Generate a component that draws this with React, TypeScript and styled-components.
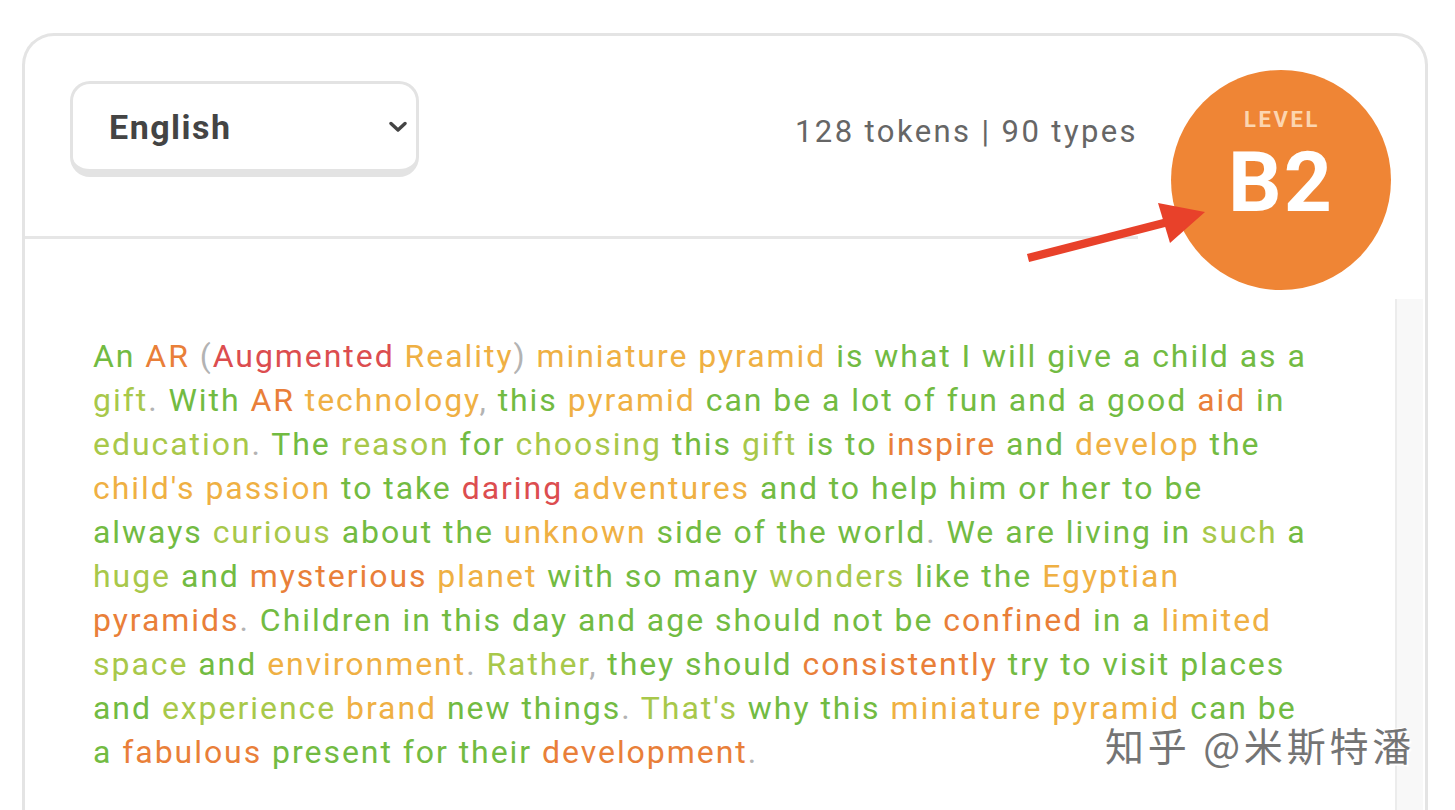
import React from "react";
import styled, { createGlobalStyle } from "styled-components";

const Global = createGlobalStyle`
  html, body { margin: 0; padding: 0; background: #ffffff; }
  body { font-family: Roboto, "Noto Sans", sans-serif; overflow: hidden; }
`;

type Tone = "g" | "l" | "y" | "o" | "r" | "p";
const TONES: Record<Tone, string> = {
  g: "#72bb42",
  l: "#a8c84a",
  y: "#efb043",
  o: "#e97f39",
  r: "#dc4d4f",
  p: "#b3b3b3",
};

const LINES: [Tone, string][][] = [
  [["g", "An "], ["o", "AR "], ["p", "("], ["r", "Augmented "], ["y", "Reality"], ["p", ") "], ["y", "miniature pyramid "], ["g", "is what I will give a child as a"]],
  [["l", "gift"], ["p", ". "], ["g", "With "], ["o", "AR "], ["y", "technology"], ["p", ", "], ["g", "this "], ["y", "pyramid "], ["g", "can be a lot of fun and a good "], ["o", "aid "], ["g", "in"]],
  [["l", "education"], ["p", ". "], ["g", "The "], ["l", "reason "], ["g", "for "], ["l", "choosing "], ["g", "this "], ["l", "gift "], ["g", "is to "], ["o", "inspire "], ["g", "and "], ["y", "develop "], ["g", "the"]],
  [["y", "child's passion "], ["g", "to take "], ["r", "daring "], ["y", "adventures "], ["g", "and to help him or her to be"]],
  [["g", "always "], ["l", "curious "], ["g", "about the "], ["y", "unknown "], ["g", "side of the world"], ["p", ". "], ["g", "We are living in "], ["l", "such "], ["g", "a"]],
  [["l", "huge "], ["g", "and "], ["o", "mysterious "], ["y", "planet "], ["g", "with so many "], ["l", "wonders "], ["g", "like the "], ["y", "Egyptian"]],
  [["o", "pyramids"], ["p", ". "], ["g", "Children in this day and age should not be "], ["o", "confined "], ["g", "in a "], ["y", "limited"]],
  [["l", "space "], ["g", "and "], ["y", "environment"], ["p", ". "], ["l", "Rather"], ["p", ", "], ["g", "they should "], ["o", "consistently "], ["g", "try to visit places"]],
  [["g", "and "], ["l", "experience "], ["y", "brand "], ["g", "new things"], ["p", ". "], ["l", "That's "], ["g", "why this "], ["y", "miniature pyramid "], ["g", "can be"]],
  [["g", "a "], ["o", "fabulous "], ["g", "present for their "], ["o", "development"], ["p", "."]],
];

const Card = styled.div`
  position: relative;
  margin: 33px 0 0 22px;
  width: 1406px;
  height: 800px;
  box-sizing: border-box;
  border: 3px solid #e4e4e4;
  border-bottom: none;
  border-radius: 32px 32px 0 0;
  display: flex;
  flex-direction: column;
`;

const Header = styled.div`
  display: flex;
  align-items: flex-start;
  justify-content: space-between;
  height: 200px;
  box-sizing: border-box;
  padding: 45px 287px 0 45px;
`;

const SelectBox = styled.div`
  width: 349px;
  height: 96px;
  box-sizing: border-box;
  border: 3px solid #e3e3e3;
  border-bottom-width: 8px;
  border-radius: 20px;
  display: flex;
  align-items: center;
  justify-content: space-between;
  padding: 0 9px 0 36px;
  font-weight: 700;
  font-size: 34px;
  letter-spacing: 1.5px;
  color: #444444;
`;

const Stats = styled.div`
  font-size: 31px;
  color: #666666;
  line-height: 96px;
  padding-top: 3px;
  letter-spacing: 2.4px;
`;

const Divider = styled.div`
  height: 3px;
  background: #e6e6e6;
  margin-right: 287px;
`;

const Body = styled.div`
  flex: 1;
  display: flex;
  padding: 0 2px 0 68px;
`;

const Passage = styled.div`
  flex: 1;
  padding-top: 95px;
  font-size: 32px;
  line-height: 44px;
`;

const Line = styled.div`
  white-space: pre;
  letter-spacing: 1.95px;
`;

const Word = styled.span<{ $tone: Tone }>`
  color: ${(p) => TONES[p.$tone]};
`;

const Track = styled.div`
  width: 28px;
  margin-top: 60px;
  box-sizing: border-box;
  background: #f8f8f8;
  border-left: 2px solid #ececec;
`;

const Badge = styled.div`
  position: absolute;
  top: 34px;
  right: 34px;
  width: 220px;
  height: 220px;
  border-radius: 50%;
  background: #ef8535;
  display: flex;
  flex-direction: column;
  align-items: center;
  font-weight: 700;
`;

const BadgeLabel = styled.div`
  margin-top: 37px;
  font-size: 22px;
  line-height: 26px;
  color: #fcd5b0;
  letter-spacing: 2.6px;
  padding-left: 2px;
`;

const BadgeLevel = styled.div`
  margin-top: 20px;
  font-size: 84px;
  line-height: 60px;
  color: #ffffff;
  letter-spacing: 2px;
`;

const ArrowSvg = styled.svg`
  position: absolute;
  left: 1000px;
  top: 160px;
  width: 200px;
  height: 90px;
  overflow: visible;
`;

const Watermark = styled.div`
  position: absolute;
  left: 1080px;
  top: 693px;
  font-family: "Noto Sans CJK SC", sans-serif;
  font-size: 39px;
  line-height: 30px;
  color: #747474;
  text-shadow: 2px 2px 0 #ffffff, -1px -1px 0 #ffffff;
  letter-spacing: 3.8px;
`;

const Chevron = () => (
  <svg width="18" height="12" viewBox="0 0 18 12">
    <path d="M2 2.5 L9 9 L16 2.5" fill="none" stroke="#444" strokeWidth="3.4" strokeLinecap="round" strokeLinejoin="round" />
  </svg>
);

export default function App() {
  return (
    <>
      <Global />
      <Card>
        <Header>
          <SelectBox>
            <span>English</span>
            <Chevron />
          </SelectBox>
          <Stats>128 tokens | 90 types</Stats>
        </Header>
        <Divider />
        <Body>
          <Passage>
            {LINES.map((line, i) => (
              <Line key={i}>
                {line.map(([tone, text], j) => (
                  <Word key={j} $tone={tone}>{text}</Word>
                ))}
              </Line>
            ))}
          </Passage>
          <Track />
        </Body>
        <Badge>
          <BadgeLabel>LEVEL</BadgeLabel>
          <BadgeLevel>B2</BadgeLevel>
        </Badge>
        <ArrowSvg viewBox="0 0 200 90">
          <path d="M3 62 L141 26.5" stroke="#e8412a" strokeWidth="8.5" strokeLinecap="butt" fill="none" />
          <polygon points="133,7 180,16 145,47" fill="#e8412a" />
        </ArrowSvg>
        <Watermark>知乎 @米斯特潘</Watermark>
      </Card>
    </>
  );
}
